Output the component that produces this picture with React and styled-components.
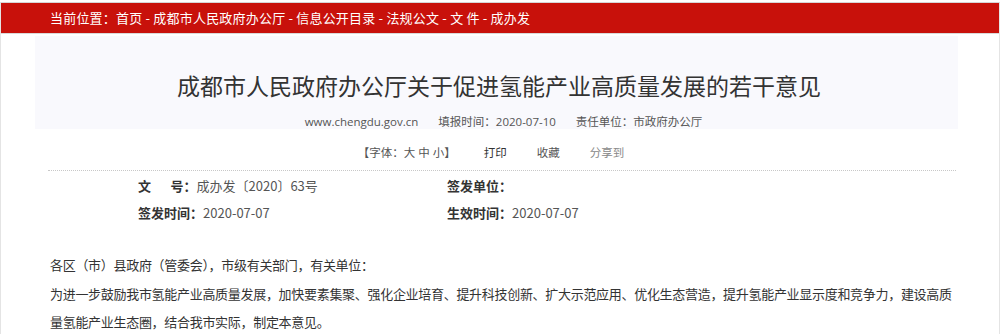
import React from "react";
import styled, { createGlobalStyle } from "styled-components";

const Global = createGlobalStyle`
  html, body { margin: 0; padding: 0; background: #fff; }
  body { font-family: "Noto Sans CJK SC", "Microsoft YaHei", sans-serif; color: #333; }
`;

const Frame = styled.div`
  margin-top: 2px;
  border-top: 1px solid #d6d6d6;
  border-left: 1px solid #e4e4e4;
  border-right: 1px solid #e4e4e4;
  min-height: 340px;
  box-sizing: border-box;
`;

const Crumb = styled.div`
  height: 30px;
  line-height: 30px;
  background: #c8110b;
  border-bottom: 1px solid #d9d9d9;
  color: #fff;
  font-size: 13px;
  letter-spacing: 0.2px;
  padding-left: 49px;
  white-space: nowrap;
`;

const Header = styled.div`
  margin: 2px 0 0 34px;
  width: 923px;
  height: 93px;
  background: #f9f9fd;
  display: flex;
  flex-direction: column;
  align-items: center;
`;

const Title = styled.h1`
  margin: 34px 0 0 5px;
  font-size: 23px;
  line-height: 30px;
  font-weight: normal;
  color: #333;
  white-space: nowrap;
`;

const Meta = styled.div`
  margin: 14px 0 0 14px;
  display: flex;
  gap: 20px;
  font-family: "Open Sans", "Noto Sans CJK SC", sans-serif;
  font-size: 11.5px;
  line-height: 16px;
  color: #555;
  white-space: nowrap;
`;

const Tools = styled.div`
  display: flex;
  justify-content: center;
  gap: 30px;
  margin-top: 16px;
  padding-right: 18px;
  font-family: "Open Sans", "Noto Sans CJK SC", sans-serif;
  font-size: 11.5px;
  line-height: 16px;
  white-space: nowrap;
`;

const Tool = styled.span`
  color: ${(p) => p.$c || "#555"};
  margin-right: ${(p) => p.$mr || 0}px;
`;

const Divider = styled.div`
  margin: 9px 43px 0 47px;
  border-top: 1px dotted #c8c8c8;
`;

const Info = styled.div`
  display: grid;
  grid-template-columns: 309px 1fr;
  grid-auto-rows: 27px;
  padding: 1px 0 0 137px;
  font-size: 13px;
  line-height: 27px;
`;

const Label = styled.b`
  font-weight: bold;
  color: #333;
`;

const Value = styled.span`
  color: #555;
`;

const Body = styled.div`
  padding: 25px 40px 0 49px;
  font-size: 13px;
  letter-spacing: -0.3px;
  line-height: 28.5px;
  color: #333;
`;

const P = styled.p`
  margin: 0;
`;

export default function App() {
  return (
    <>
      <Global />
      <Frame>
        <Crumb>当前位置：首页 - 成都市人民政府办公厅 - 信息公开目录 - 法规公文 - 文 件 - 成办发</Crumb>
        <Header>
          <Title>成都市人民政府办公厅关于促进氢能产业高质量发展的若干意见</Title>
          <Meta>
            <span>www.chengdu.gov.cn</span>
            <span>填报时间：2020-07-10</span>
            <span>责任单位：市政府办公厅</span>
          </Meta>
        </Header>
        <Tools>
          <Tool $c="#555" $mr={-2}>【字体：大 中 小】</Tool>
          <Tool $c="#333">打印</Tool>
          <Tool $c="#555">收藏</Tool>
          <Tool $c="#888">分享到</Tool>
        </Tools>
        <Divider />
        <Info>
          <div><Label>文&emsp;&ensp;号：</Label><Value>成办发〔2020〕63号</Value></div>
          <div><Label>签发单位：</Label></div>
          <div><Label>签发时间：</Label><Value>2020-07-07</Value></div>
          <div><Label>生效时间：</Label><Value>2020-07-07</Value></div>
        </Info>
        <Body>
          <P>各区（市）县政府（管委会），市级有关部门，有关单位：</P>
          <P>为进一步鼓励我市氢能产业高质量发展，加快要素集聚、强化企业培育、提升科技创新、扩大示范应用、优化生态营造，提升氢能产业显示度和竞争力，建设高质量氢能产业生态圈，结合我市实际，制定本意见。</P>
        </Body>
      </Frame>
    </>
  );
}
